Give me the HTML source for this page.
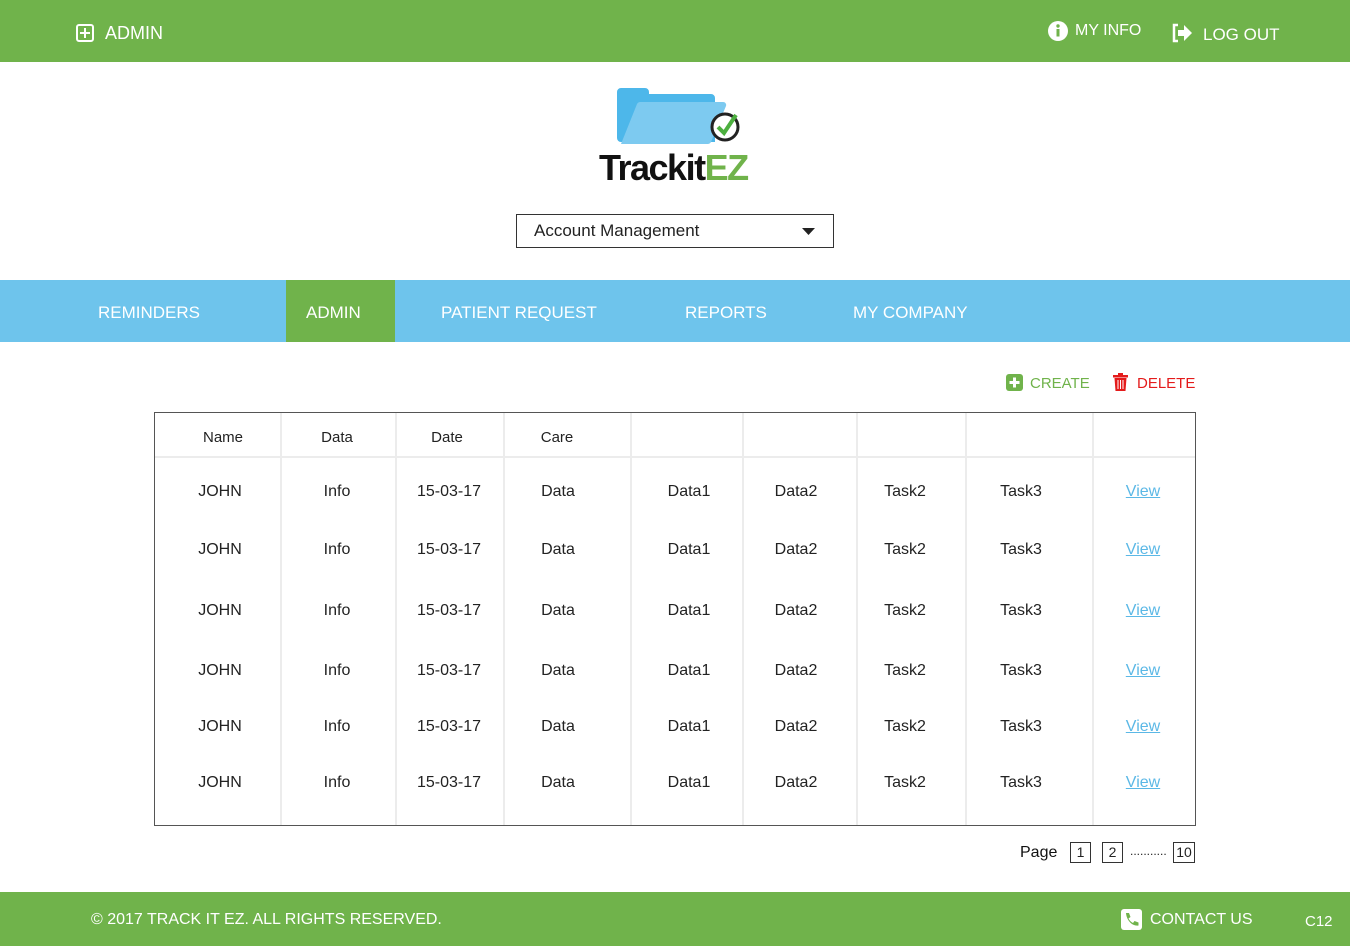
<!DOCTYPE html>
<html><head><meta charset="utf-8"><style>
*{margin:0;padding:0;box-sizing:border-box}
body{width:1350px;height:946px;position:relative;background:#fff;font-family:"Liberation Sans",sans-serif;overflow:hidden;color:#222}
.a{position:absolute;white-space:nowrap}
.top{position:absolute;left:0;top:0;width:1350px;height:62px;background:#70b34b}
.nav{position:absolute;left:0;top:280px;width:1350px;height:62px;background:#6ec4ec}
.foot{position:absolute;left:0;top:892px;width:1350px;height:54px;background:#70b34b}
.w{color:#fff;font-size:18px}
.tbl{position:absolute;left:154px;top:412px;width:1042px;height:414px;border:1px solid #555}
.vl{position:absolute;top:0;width:2px;height:412px;background:#ececec}
.hl{position:absolute;left:0;top:43px;width:1040px;height:2px;background:#ececec}
.c{position:absolute;font-size:16px;color:#222;transform:translateX(-50%);white-space:nowrap}
.v{color:#5bb8e6;text-decoration:underline}
.pb{position:absolute;top:842px;height:21px;border:1px solid #333;font-size:14px;text-align:center;line-height:19px}
</style></head><body>
<div class="top"></div>
<svg class="a" style="left:76px;top:24px" width="18" height="18" viewBox="0 0 18 18"><rect x="1" y="1" width="16" height="16" rx="2" fill="none" stroke="#fff" stroke-width="2"/><path d="M9 4v10M4 9h10" stroke="#fff" stroke-width="2"/></svg>
<div class="a w" style="left:105px;top:23px;font-size:18px">ADMIN</div>
<svg class="a" style="left:1048px;top:21px" width="20" height="20" viewBox="0 0 20 20"><circle cx="10" cy="10" r="10" fill="#fff"/><rect x="8.5" y="8" width="3" height="7.5" fill="#70b34b"/><circle cx="10" cy="5" r="1.7" fill="#70b34b"/></svg>
<div class="a w" style="left:1075px;top:22px;font-size:16px">MY INFO</div>
<svg class="a" style="left:1171px;top:23px" width="22" height="20" viewBox="0 0 22 20"><path d="M7 2H3v16h4" fill="none" stroke="#fff" stroke-width="2.5"/><path d="M7 7h6V2l8 8-8 8v-5H7z" fill="#fff"/></svg>
<div class="a w" style="left:1203px;top:25px;font-size:17px">LOG OUT</div>

<svg class="a" style="left:615px;top:86px" width="130" height="62" viewBox="0 0 130 62">
<path d="M6 2h24a4 4 0 0 1 4 4v2h62a4 4 0 0 1 4 4v44H6a4 4 0 0 1-4-4V6a4 4 0 0 1 4-4z" fill="#4db7ea"/>
<path d="M26 16h82a3 3 0 0 1 3 4L96 56a4 4 0 0 1-4 2H6l16-40a4 4 0 0 1 4-2z" fill="#7dcaf0"/>
<circle cx="110" cy="41" r="13" fill="#fff" stroke="#222" stroke-width="3"/>
<path d="M103 41l6 6 12-18" fill="none" stroke="#4caf3f" stroke-width="4"/>
</svg>
<div class="a" style="left:599px;top:147px;font-size:36px;font-weight:bold;color:#111;letter-spacing:-1.5px">Trackit<span style="color:#70b34b">EZ</span></div>

<div class="a" style="left:516px;top:214px;width:318px;height:34px;border:1px solid #333"></div>
<div class="a" style="left:534px;top:221px;font-size:17px;color:#222">Account Management</div>
<svg class="a" style="left:802px;top:228px" width="13" height="8"><path d="M0 0h13L6.5 7z" fill="#222"/></svg>

<div class="nav"></div>
<div class="a" style="left:286px;top:280px;width:109px;height:62px;background:#70b34b"></div>
<div class="a w" style="left:98px;top:303px;font-size:17px">REMINDERS</div>
<div class="a w" style="left:306px;top:303px;font-size:17px">ADMIN</div>
<div class="a w" style="left:441px;top:303px;font-size:17px">PATIENT REQUEST</div>
<div class="a w" style="left:685px;top:303px;font-size:17px">REPORTS</div>
<div class="a w" style="left:853px;top:303px;font-size:17px">MY COMPANY</div>

<svg class="a" style="left:1006px;top:374px" width="17" height="17"><rect width="17" height="17" rx="3" fill="#70b34b"/><path d="M8.5 3.5v10M3.5 8.5h10" stroke="#fff" stroke-width="3"/></svg>
<div class="a" style="left:1030px;top:375px;font-size:15px;color:#70b34b">CREATE</div>
<svg class="a" style="left:1113px;top:373px" width="15" height="18" viewBox="0 0 15 18"><rect x="0" y="2" width="15" height="2.5" fill="#e41b1b"/><rect x="5" y="0" width="5" height="3" fill="#e41b1b"/><path d="M1.5 5h12l-1 13h-10z" fill="#e41b1b"/><path d="M5 7v9M7.5 7v9M10 7v9" stroke="#fff" stroke-width="1"/></svg>
<div class="a" style="left:1137px;top:375px;font-size:15px;color:#e41b1b">DELETE</div>

<div class="tbl">
<div class="hl"></div>
<div class="vl" style="left:125px"></div><div class="vl" style="left:240px"></div><div class="vl" style="left:348px"></div><div class="vl" style="left:475px"></div><div class="vl" style="left:587px"></div><div class="vl" style="left:701px"></div><div class="vl" style="left:810px"></div><div class="vl" style="left:937px"></div>
</div>
<div id="cells"></div>
<div class="c" style="left:223px;top:429px;font-size:15px">Name</div>
<div class="c" style="left:337px;top:429px;font-size:15px">Data</div>
<div class="c" style="left:447px;top:429px;font-size:15px">Date</div>
<div class="c" style="left:557px;top:429px;font-size:15px">Care</div>
<script>
var ys=[483,541,602,662,718,774],h='';
var cols=[[220,'JOHN'],[337,'Info'],[449,'15-03-17'],[558,'Data'],[689,'Data1'],[796,'Data2'],[905,'Task2'],[1021,'Task3'],[1143,'View']];
ys.forEach(function(y){cols.forEach(function(c){h+='<div class="c'+(c[1]=='View'?' v':'')+'" style="left:'+c[0]+'px;top:'+y+'px">'+c[1]+'</div>';});});
document.getElementById('cells').innerHTML=h;
</script>

<div class="a" style="left:1020px;top:844px;font-size:16px;color:#111">Page</div>
<div class="pb" style="left:1070px;width:21px">1</div>
<div class="pb" style="left:1102px;width:21px">2</div>
<div class="a" style="left:1130px;top:844px;font-size:12px">...........</div>
<div class="pb" style="left:1173px;width:22px">10</div>

<div class="foot"></div>
<div class="a w" style="left:91px;top:911px;font-size:16px">© 2017 TRACK IT EZ. ALL RIGHTS RESERVED.</div>
<svg class="a" style="left:1121px;top:909px" width="21" height="21" viewBox="0 0 21 21"><rect width="21" height="21" rx="3" fill="#fff"/><path d="M5 4l3 0 1.5 4-2 1.5c1 2 2.5 3.5 4.5 4.5l1.5-2 4 1.5v3c-6 1-12-5-12.5-12.5z" fill="#70b34b"/></svg>
<div class="a w" style="left:1150px;top:911px;font-size:16px">CONTACT US</div>
<div class="a w" style="left:1305px;top:913px;font-size:15px">C12</div>
</body></html>
